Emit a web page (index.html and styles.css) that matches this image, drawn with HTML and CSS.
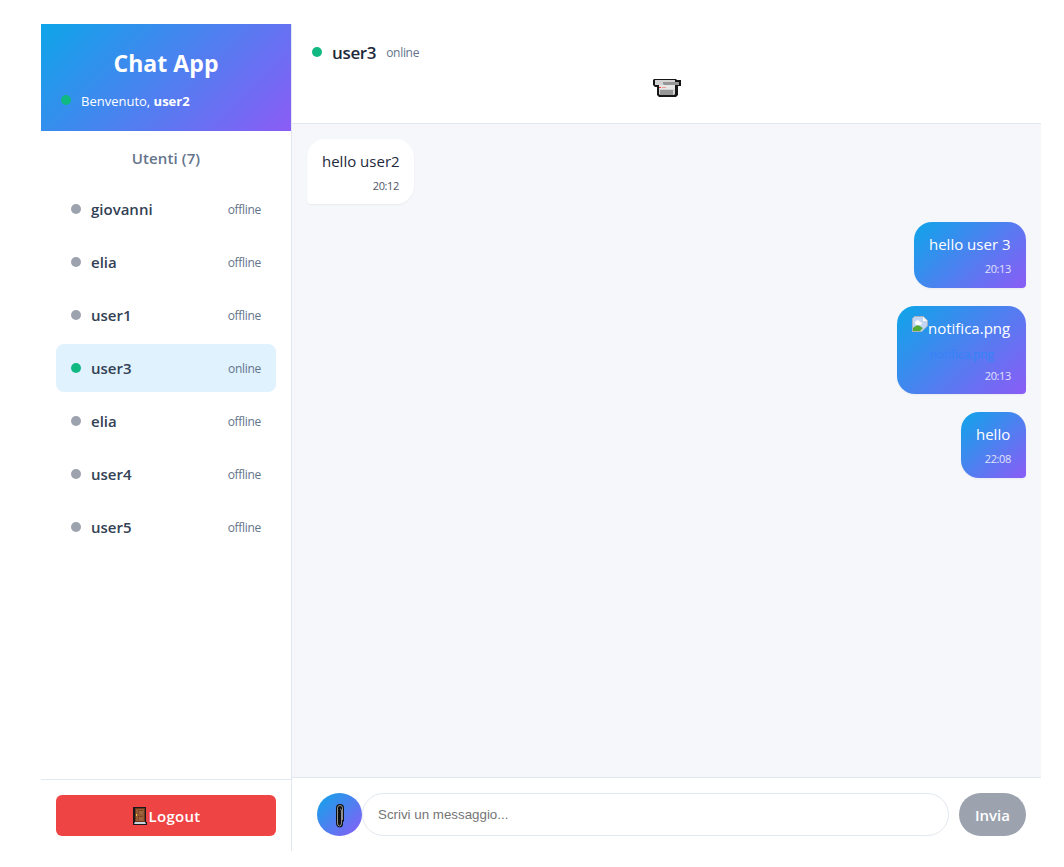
FILE: index.html
```html
<!DOCTYPE html>
<html lang="it">
<head>
<meta charset="utf-8">
<title>Chat App</title>
<link rel="stylesheet" href="styles.css">
</head>
<body>
<div class="app">
  <aside class="sidebar">
    <header class="brand">
      <h1>Chat App</h1>
      <div class="welcome"><span class="dot online"></span><span class="welcome-text">Benvenuto, <b>user2</b></span></div>
    </header>
    <section class="users">
      <h2>Utenti (7)</h2>
      <ul class="user-list">
        <li class="user"><span class="dot"></span><span class="name">giovanni</span><span class="state">offline</span></li>
        <li class="user"><span class="dot"></span><span class="name">elia</span><span class="state">offline</span></li>
        <li class="user"><span class="dot"></span><span class="name">user1</span><span class="state">offline</span></li>
        <li class="user active"><span class="dot online"></span><span class="name">user3</span><span class="state">online</span></li>
        <li class="user"><span class="dot"></span><span class="name">elia</span><span class="state">offline</span></li>
        <li class="user"><span class="dot"></span><span class="name">user4</span><span class="state">offline</span></li>
        <li class="user"><span class="dot"></span><span class="name">user5</span><span class="state">offline</span></li>
      </ul>
    </section>
    <footer class="side-footer">
      <button class="logout">
        <svg class="door" viewBox="0 0 16 20"><path fill="#15191c" d="M1 1h13v15h1v3H1v-3z"/><path fill="#70391d" d="M3 2h10v14H3z"/><path fill="#955a35" d="M4 3h8v12H4z"/><path fill="#7c4525" d="M6 4h5v4H6zM6 10h5v4H6z"/><path fill="#a0633d" d="M7 5h4v3H7zM7 11h4v3H7z"/><path fill="#f7c331" d="M4 8h1v2H4z"/><path fill="#c9d5de" d="M3 16h10l1 2H2z"/></svg><span>Logout</span>
      </button>
    </footer>
  </aside>
  <main class="chat">
    <header class="chat-header">
      <div class="peer"><span class="dot online"></span><span class="peer-name">user3</span><span class="state">online</span></div>
      <div class="call">
        <svg class="camera" viewBox="0 0 28 20"><path fill="#161616" d="M1 1h22l1 1h4v6h-3v9l-2 2H6l-2-2V9H2L0 7V2z"/><path fill="#d2d2d2" d="M2 2h20v14l-1 1H7l-1-1V7H2z"/><path fill="#e6e6e6" d="M6 7h16v4H6z"/><path fill="#969696" d="M10 4h16v3H11l-1-1zM7 12h13v5H7z"/><path fill="#e33" d="M6 9h2v1H6z"/><path fill="#e99" d="M9 9h4v1H9z"/></svg>
      </div>
    </header>
    <div class="messages">
      <div class="message received w-107"><p>hello user2</p><time>20:12</time></div>
      <div class="message sent w-112"><p>hello user 3</p><time>20:13</time></div>
      <div class="message sent file w-129">
        <div class="attachment"><svg class="broken" viewBox="0 0 16 16"><path fill="#c3d6f4" stroke="#a9b2bf" d="M.5 2.500L2.500.5h9l4 4V10L10 15.500H.5z"/><path fill="#fff" d="M3 7c0-3 4-4 5-1 3 0 2 3 0 3H4zM11 1v4h4z"/><path fill="#54ac36" d="M1 15v-3c4-4 6-3 8-1l2 1-3 3z"/><path fill="#2496ea" d="M10 16l6-6v6z"/></svg><span>notifica.png</span></div>
        <a class="file-name">notifica.png</a>
        <time>20:13</time>
      </div>
      <div class="message sent w-65"><p>hello</p><time>22:08</time></div>
    </div>
    <form class="composer">
      <span class="attach"><svg class="clip" viewBox="0 0 10 24"><path fill="#111" d="M1 4Q1 0 5 0t4 4v13l-1 1v2q0 3-3 3.500Q1 23 1 19z"/><path fill="none" stroke="#909090" d="M7.500 16V4Q7.500 1.500 5 1.500T2.500 4v15q0 3 2 3t2-3V7q0-2-1.500-2"/></svg></span>
      <input type="text" placeholder="Scrivi un messaggio...">
      <button type="button" class="send">Invia</button>
    </form>
  </main>
</div>
</body>
</html>
```
FILE: styles.css
```css
* { box-sizing: border-box; }
body {
  margin: 0;
  padding: 24px 23px 16px 41px;
  background: #fff;
  color: #1e293b;
  font-family: "Open Sans", "Noto Sans", sans-serif;
  font-size: 15px;
}
h1, h2, p, ul { margin: 0; padding: 0; }
.app { display: flex; width: 1000px; height: 827px; }
.sidebar {
  width: 251px;
  display: flex;
  flex-direction: column;
  border-right: 1px solid #e2e8f0;
}
.brand {
  height: 107px;
  padding: 23px 20px 0;
  color: #fff;
  background: linear-gradient(135deg, #0ea5e9, #8b5cf6);
}
.brand h1 { text-align: center; font-size: 23px; line-height: 32px; font-weight: 700; letter-spacing: .05px; }
.welcome { display: flex; align-items: center; gap: 10px; margin-top: 12px; line-height: 20px; font-size: 13px; }
.welcome .dot { margin-top: -2px; }
.dot { width: 10px; height: 10px; border-radius: 50%; background: #9ca3af; flex: none; }
.dot.online { background: #10b981; }
.users { flex: 1; padding: 15px 15px 0; }
.users h2 { font-size: 15px; line-height: 24px; font-weight: 600; color: #64748b; text-align: center; letter-spacing: .1px; }
.user-list { list-style: none; display: flex; flex-direction: column; gap: 5px; margin-top: 15px; }
.user { display: flex; align-items: center; gap: 10px; height: 48px; padding: 0 15px; border-radius: 8px; }
.user .dot { margin-top: -1px; }
.user.active { background: #e0f2fe; }
.name { flex: 1; font-weight: 600; color: #334155; }
.state { font-size: 12px; color: #64748b; letter-spacing: -.3px; }
.user .state { padding-top: 1px; }
.side-footer { height: 72px; padding: 15px; border-top: 1px solid #e2e8f0; }
button { border: 0; font: 600 15px "Open Sans", sans-serif; color: #fff; }
.logout {
  display: flex;
  align-items: center;
  justify-content: center;
  width: 220px;
  height: 41px;
  padding: 0 0 0 1px;
  border-radius: 6px;
  background: #ef4444;
  letter-spacing: .3px;
}
.door { width: 16px; height: 20px; margin-top: 1px; }
.chat { flex: 1; display: flex; flex-direction: column; min-width: 0; }
.chat-header { height: 100px; padding: 16px 20px 0; border-bottom: 1px solid #e2e8f0; }
.peer { display: flex; align-items: center; gap: 10px; height: 24px; }
.peer-name { font-size: 17px; font-weight: 600; letter-spacing: -.35px; }
.peer .state { padding-top: 1px; }
.call { display: flex; justify-content: center; padding-top: 14px; }
.camera { width: 28px; height: 20px; }
.messages { flex: 1; display: flex; flex-direction: column; gap: 18px; padding: 15px; background: #f5f7fb; }
.message { height: 66px; padding: 10px 15px; border-radius: 18px; white-space: nowrap; box-shadow: 0 1px 2px rgba(0,0,0,.05); line-height: 24px; }
.message.received { align-self: flex-start; height: 65px; background: #fff; border-bottom-left-radius: 4px; }
.message.sent { align-self: flex-end; color: #fff; background: linear-gradient(135deg, #0ea5e9, #8b5cf6); border-bottom-right-radius: 4px; }
.message time { display: block; margin-top: 4px; line-height: 17px; font-size: 11px; text-align: right; opacity: .8; letter-spacing: -.35px; }
.message.file { height: 88px; }
.w-107 { width: 107px; }
.w-112 { width: 112px; }
.w-129 { width: 129px; }
.w-65 { width: 65px; }
.attachment { display: flex; }
.broken { width: 16px; height: 16px; flex: none; }
.file-name { display: block; margin-top: 5px; line-height: 20px; font-size: 12px; font-weight: 600; letter-spacing: -.4px; text-align: center; color: #3b82f6; }
.message.file time { margin-top: 2px; }
.composer { display: flex; height: 74px; padding: 15px 15px 15px 25px; border-top: 1px solid #e2e8f0; }
.attach { display: flex; align-items: center; justify-content: center; width: 45px; height: 43px; border-radius: 50%; background: linear-gradient(135deg, #0ea5e9, #8b5cf6); }
.clip { width: 10px; height: 24px; margin-top: 3px; }
.composer input { flex: 1; height: 43px; padding: 0 15px; border: 1px solid #e2e8f0; border-radius: 22px; background: #fff; font: 13.333px "Liberation Sans", sans-serif; }
.composer input::placeholder { color: #757575; }
.send { width: 67px; height: 43px; margin-left: 10px; padding: 1px 0 0; border-radius: 22px; background: #9ca3af; }
```
